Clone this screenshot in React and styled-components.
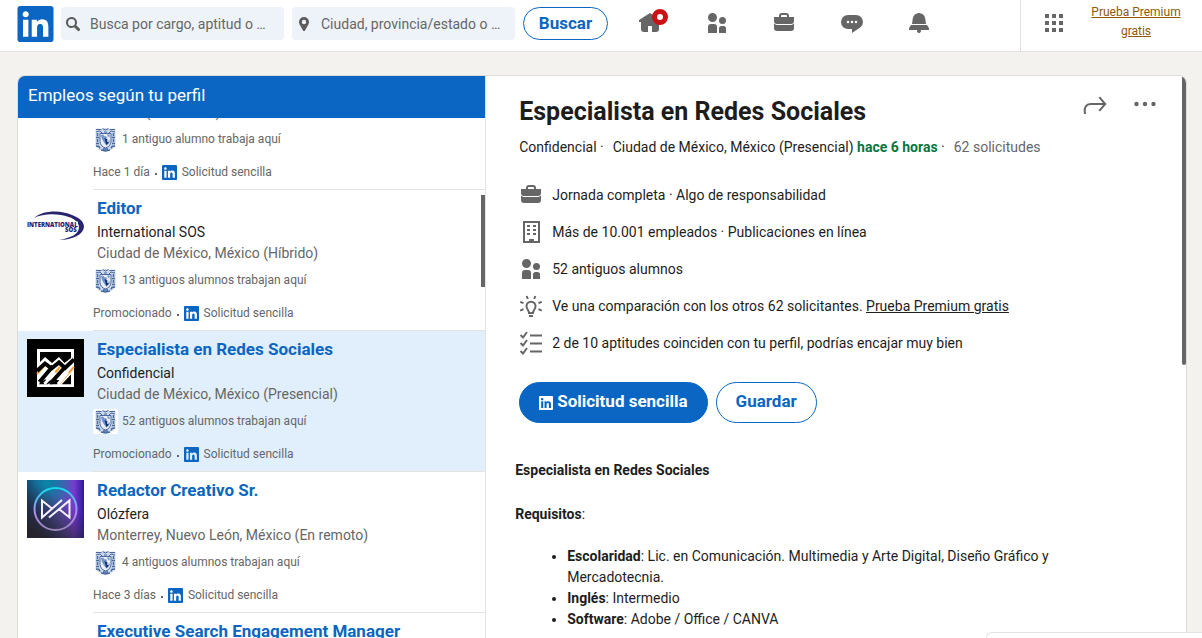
import { useLayoutEffect, useRef } from "react";
import styled, { createGlobalStyle } from "styled-components";
import { FaLinkedin } from "react-icons/fa6";

const theme = {
  blue: "#0a66c2",
  text: "#1d1d1d",
  muted: "#666666",
  line: "#e4e3e0",
  font: `Roboto, "Liberation Sans", sans-serif`,
};

const navItems = [
  {
    label: "Inicio",
    badge: true,
    path: "M23 9v2h-2v7a3 3 0 01-3 3h-4v-6h-4v6H6a3 3 0 01-3-3v-7H1V9l11-7 5 3.18V2h3v5.09z",
  },
  {
    label: "Mi red",
    path: "M12 16v6H3v-6a3 3 0 013-3h3a3 3 0 013 3zm5.5-3A3.5 3.5 0 1014 9.5a3.5 3.5 0 003.5 3.5zm1 2h-2a2.5 2.5 0 00-2.5 2.5V22h7v-4.5a2.5 2.5 0 00-2.5-2.5zM7.5 2A4.5 4.5 0 1012 6.5 4.49 4.49 0 007.5 2z",
  },
  {
    label: "Empleos",
    path: "M17 6V5a3 3 0 00-3-3h-4a3 3 0 00-3 3v1H2v4a3 3 0 003 3h14a3 3 0 003-3V6zM9 5a1 1 0 011-1h4a1 1 0 011 1v1H9zm10 9a4 4 0 003-1.38V17a3 3 0 01-3 3H5a3 3 0 01-3-3v-4.38A4 4 0 005 14z",
  },
  {
    label: "Mensajes",
    path: "M16 4H8a7 7 0 000 14h4v4l8.16-5.39A6.78 6.78 0 0023 11a7 7 0 00-7-7zm-8 8.25A1.25 1.25 0 119.25 11 1.25 1.25 0 018 12.25zm4 0A1.25 1.25 0 1113.25 11 1.25 1.25 0 0112 12.25zm4 0A1.25 1.25 0 1117.25 11 1.25 1.25 0 0116 12.25z",
  },
  {
    label: "Notificaciones",
    path: "M22 19h-8.28a2 2 0 11-3.44 0H2v-1a4.52 4.52 0 011.17-2.83l1-1.17h15.7l1 1.17A4.42 4.42 0 0122 18zM18.21 7.44A6.27 6.27 0 0012 2a6.27 6.27 0 00-6.21 5.44L5 13h14z",
  },
];

const gridPath =
  "M3 3h4v4H3zm7 4h4V3h-4zm7-4v4h4V3zM3 14h4v-4H3zm7 0h4v-4h-4zm7 0h4v-4h-4zM3 21h4v-4H3zm7 0h4v-4h-4zm7 0h4v-4h-4z";

const jobs = [
  {
    title: "",
    company: "",
    place: "México (Presencial)",
    alumni: "1 antiguo alumno trabaja aquí",
    when: "Hace 1 día",
  },
  {
    title: "Editor",
    company: "International SOS",
    place: "Ciudad de México, México (Híbrido)",
    alumni: "13 antiguos alumnos trabajan aquí",
    when: "Promocionado",
    logo: SosLogo,
  },
  {
    title: "Especialista en Redes Sociales",
    company: "Confidencial",
    place: "Ciudad de México, México (Presencial)",
    alumni: "52 antiguos alumnos trabajan aquí",
    when: "Promocionado",
    logo: PeaksLogo,
    selected: true,
  },
  {
    title: "Redactor Creativo Sr.",
    company: "Olózfera",
    place: "Monterrey, Nuevo León, México (En remoto)",
    alumni: "4 antiguos alumnos trabajan aquí",
    when: "Hace 3 días",
    logo: OlozferaLogo,
  },
  {
    title: "Executive Search Engagement Manager",
    company: "",
    place: "",
    alumni: "",
    when: "",
  },
];

export default function App() {
  const scroller = useRef(null);

  useLayoutEffect(() => {
    scroller.current.scrollTop = 72;
  }, []);

  return (
    <Page>
      <GlobalStyle />
      <TopBar>
        <Brand href="#" aria-label="LinkedIn">
          <FaLinkedin viewBox="0 32 448 448" />
        </Brand>
        <SearchForm onSubmit={(e) => e.preventDefault()}>
          <SearchBox>
            <svg viewBox="0 0 16 16" aria-hidden="true">
              <path d="M14.56 12.44L11.3 9.18a5.51 5.51 0 10-2.12 2.12l3.26 3.26a1.5 1.5 0 102.12-2.12zM3 6.5A3.5 3.5 0 116.5 10 3.5 3.5 0 013 6.5z" />
            </svg>
            <input aria-label="Cargo" placeholder="Busca por cargo, aptitud o …" />
          </SearchBox>
          <SearchBox>
            <svg viewBox="0 0 16 16" aria-hidden="true">
              <path d="M8 1a5 5 0 00-5 5 5.2 5.2 0 00.64 2.5L7 14.4a1.15 1.15 0 002 0l3.36-5.9A5.2 5.2 0 0013 6a5 5 0 00-5-5zm0 7.2A2.2 2.2 0 1110.2 6 2.2 2.2 0 018 8.2z" />
            </svg>
            <input aria-label="Lugar" placeholder="Ciudad, provincia/estado o …" />
          </SearchBox>
          <SearchButton type="submit">Buscar</SearchButton>
        </SearchForm>
        <Nav>
          {navItems.map((item) => (
            <NavLink href="#" key={item.label} aria-label={item.label}>
              <Icon path={item.path} />
              {item.badge && <Badge />}
            </NavLink>
          ))}
          <NavLink href="#" aria-label="Yo" />
        </Nav>
        <Extras>
          <AppsButton type="button" aria-label="Productos">
            <Icon path={gridPath} />
          </AppsButton>
          <PremiumLink href="#">Prueba Premium gratis</PremiumLink>
        </Extras>
      </TopBar>

      <Main>
        <Card>
          <ListPane>
            <ListTitle>Empleos según tu perfil</ListTitle>
            <Jobs ref={scroller}>
              {jobs.map((job, i) => (
                <JobItem job={job} key={i} />
              ))}
            </Jobs>
            <ListThumb />
          </ListPane>
          <Detail>
            <DetailHead>
              <h1>Especialista en Redes Sociales</h1>
              <Actions>
                <IconButton type="button" aria-label="Compartir">
                  <svg viewBox="0 0 24 24" fill="none" stroke="currentColor" strokeWidth="2">
                    <path d="M2 20l-.2-1.8C1 13.5 3.2 10 7.5 10H22M16.3 3.2L22.2 10l-5.9 6.8" />
                  </svg>
                </IconButton>
                <IconButton type="button" aria-label="Más opciones">
                  <svg viewBox="0 0 24 24">
                    <circle cx="3.5" cy="10" r="2.2" />
                    <circle cx="12" cy="10" r="2.2" />
                    <circle cx="20.5" cy="10" r="2.2" />
                  </svg>
                </IconButton>
              </Actions>
            </DetailHead>
            <Meta>
              <span>Confidencial ·</span>
              <span>
                Ciudad de México, México (Presencial) <b>hace 6 horas</b> ·
              </span>
              <em>62 solicitudes</em>
            </Meta>
            <Facts>
              <li>
                <Icon path={navItems[2].path} />
                Jornada completa · Algo de responsabilidad
              </li>
              <li>
                <Icon path="M4 1v22h17V1zm15 20h-4v-2h-5v2H6V3h13zM8 5h3v2H8zm6 0h3v2h-3zM8 9h3v2H8zm6 0h3v2h-3zm-6 4h3v2H8zm6 0h3v2h-3z" />
                Más de 10.001 empleados · Publicaciones en línea
              </li>
              <li>
                <Icon path={navItems[1].path} />
                52 antiguos alumnos
              </li>
              <li>
                <svg viewBox="0 0 24 24" fill="none" stroke="currentColor" strokeWidth="2" aria-hidden="true">
                  <path d="M10 19c0-3-2.500-3.500-2.500-6.800a4.500 4.500 0 019 0c0 3.300-2.500 3.800-2.500 6.800zM10 22h4M8.800 5L7.700 2M15.200 5l1.100-3M4.500 9.200L1.200 7.800M4.500 15.200l-3.300 1.500M19.500 9.200l3.300-1.400M19.500 15.200l3.300 1.500" />
                </svg>
                <span>
                  Ve una comparación con los otros 62 solicitantes. <a href="#">Prueba Premium gratis</a>
                </span>
              </li>
              <li>
                <svg viewBox="0 0 24 24" fill="none" stroke="currentColor" strokeWidth="2" aria-hidden="true">
                  <path d="M11 4.500h12M11 12.500h12M11 20.500h12M1.500 4L4 6.500 8 1M1.500 12L4 14.500 8 9M1.500 20L4 22.500 8 17" />
                </svg>
                2 de 10 aptitudes coinciden con tu perfil, podrías encajar muy bien
              </li>
            </Facts>
            <Buttons>
              <Pill type="button" $primary>
                <FaLinkedin viewBox="0 32 448 448" />
                Solicitud sencilla
              </Pill>
              <Pill type="button">Guardar</Pill>
            </Buttons>
            <Description>
              <p>
                <b>Especialista en Redes Sociales</b>
              </p>
              <p>
                <b>Requisitos</b>:
              </p>
              <ul>
                <li>
                  <b>Escolaridad</b>: Lic. en Comunicación. Multimedia y Arte Digital, Diseño Gráfico y
                  Mercadotecnia.
                </li>
                <li>
                  <b>Inglés</b>: Intermedio
                </li>
                <li>
                  <b>Software</b>: Adobe / Office / CANVA
                </li>
              </ul>
            </Description>
            <DetailThumb />
          </Detail>
        </Card>
      </Main>
      <ChatDock />
    </Page>
  );
}

function Icon({ path }) {
  return (
    <svg viewBox="0 0 24 24" aria-hidden="true">
      <path d={path} />
    </svg>
  );
}

function JobItem({ job }) {
  const Logo = job.logo;
  return (
    <Job $selected={job.selected}>
      <LogoBox>{Logo && <Logo />}</LogoBox>
      <JobBody>
        <JobTitle href="#">{job.title}</JobTitle>
        <Company>{job.company}</Company>
        <Place>{job.place}</Place>
        {job.alumni && (
          <Alumni>
            <Crest />
            {job.alumni}
          </Alumni>
        )}
        {job.when && (
          <JobFooter>
            {job.when}
            <Dot />
            <FaLinkedin viewBox="0 32 448 448" />
            Solicitud sencilla
          </JobFooter>
        )}
      </JobBody>
    </Job>
  );
}

// university shield, shown next to the alumni count
function Crest() {
  return (
    <svg viewBox="0 0 25 25" aria-hidden="true">
      <rect width="25" height="25" rx="2" fill="#fff" />
      <path d="M2.500 2q3-1 6 0l4-1 4 1q3-1 6 0v17l-3 3-7 2.500L6 22.500l-3.500-3z" fill="#cdd7e9" />
      <g fill="none" stroke="#46689f">
        <path d="M3 2.500h5.500M16.500 2.500H22M9.500 1.500l3 1.500 3-1.500M3 5l4-1 2 2M22 5l-4-1-2 2M11 5h3" />
        <path d="M4.500 6v3M3 10.500h3M4.500 12v3M3 16.500h3M20.500 6v3M19 10.500h3M20.500 12v3M19 16.500h3" strokeWidth="1.500" />
        <path d="M3 19l3 .5 1 2M22 19l-3 .5-1 2M8 23l4.500 1 4.500-1M10 22h5" strokeWidth="1.400" />
        <path d="M7 6.500h11v8q-.5 5-5.500 6.500Q7.500 19.500 7 14.500z" fill="#e8eef7" />
      </g>
      <path d="M8 8l2-.5 1.500 2 1.500-.5 1 2-1.500 2 .5 3 .5 2.500-2.500-3-2-3.500zM14 7.500h2.500v3L15 9.500zM15.500 13l1.500 1-1.500 3.500z" fill="#7492c4" />
      <path d="M11.500 11l3 1.500-.5 2 2 1-2.500 3-1-3.500z" fill="#0d3276" />
    </svg>
  );
}

function SosLogo() {
  return (
    <svg viewBox="0 0 57 58" role="img" aria-label="International SOS">
      <path
        d="M7 20C16 12 34 12 45 17c8 3 12 7 12 12-1 8-11 12.500-25 13 12-2 20-6 20-13 0-6-8-10.500-18-12-10-1.500-20-.5-27 3z"
        fill="#28246f"
      />
      <path d="M45 23.500h6V29h-6z" fill="#fff" />
      <text x="0" y="29" fill="#28246f" fontFamily="Open Sans, sans-serif" fontWeight="800" fontSize="6">
        INTERNATIONAL
      </text>
      <text x="38" y="34" fill="#28246f" fontFamily="Open Sans, sans-serif" fontWeight="800" fontSize="6">
        SOS
      </text>
    </svg>
  );
}

function PeaksLogo() {
  return (
    <svg viewBox="0 0 57 58" aria-hidden="true">
      <rect width="57" height="58" fill="#000" />
      <path d="M10 10h37v38H10z" fill="#fff" />
      <path d="M13 13h31v6l-6.500 5L32 18l-7 6-7-6-5 5z" fill="#000" />
      <path d="M33 28L19 44M47 28L32 45M18 26l-8 9" fill="none" stroke="#f0a030" strokeWidth="2" />
      <path
        d="M10 32l8-7.500 6.500 5L32 23.500l6 5.500 9-8.500M26 27L12.500 43M39 27L23 45"
        fill="none"
        stroke="#000"
        strokeWidth="4"
      />
      <path d="M12 45.500h9l3-4-6-1-5 3zM22 45.500h8l4-4-6-1zM34.500 45.500H44V35.500z" fill="#000" />
      <path d="M28 33L17.500 45M41 33L31 45" fill="none" stroke="#fff" strokeWidth="3" />
      <path d="M10 45.500h37V48H10z" fill="#fff" />
    </svg>
  );
}

function OlozferaLogo() {
  return (
    <svg viewBox="0 0 57 58" aria-hidden="true">
      <defs>
        <linearGradient id="oz-base" x1="0" y1="0" x2="1" y2="0">
          <stop offset="0" stopColor="#123c68" />
          <stop offset="0.6" stopColor="#5a4fae" />
          <stop offset="0.82" stopColor="#7a3ad0" />
          <stop offset="1" stopColor="#2a1c9c" />
        </linearGradient>
        <radialGradient id="oz-teal" cx="0.35" cy="0.05" r="0.5">
          <stop offset="0" stopColor="#0788a8" />
          <stop offset="1" stopColor="#0788a8" stopOpacity="0" />
        </radialGradient>
        <linearGradient id="oz-shade" x1="0.7" y1="0.4" x2="0.3" y2="1">
          <stop offset="0" stopColor="#26232f" stopOpacity="0" />
          <stop offset="1" stopColor="#26232f" />
        </linearGradient>
        <linearGradient id="oz-ring" x1="0" y1="0" x2="0" y2="1">
          <stop offset="0" stopColor="#16d9ee" />
          <stop offset="0.6" stopColor="#b58cf0" />
          <stop offset="1" stopColor="#9a86b8" />
        </linearGradient>
      </defs>
      <rect width="57" height="58" fill="url(#oz-base)" />
      <rect width="57" height="58" fill="url(#oz-teal)" />
      <rect width="57" height="58" fill="url(#oz-shade)" />
      <circle cx="28.500" cy="29" r="21" fill="none" stroke="url(#oz-ring)" strokeWidth="2" />
      <path
        d="M35 20L15 37.500v-17l10.500 8.500M22 37.500l20.500-17v17L32 29"
        fill="none"
        stroke="#f4efff"
        strokeWidth="2"
      />
    </svg>
  );
}

const GlobalStyle = createGlobalStyle`
  * {
    box-sizing: border-box;
  }
  body {
    margin: 0;
    background: #f3f2ee;
    color: ${theme.text};
    font-family: ${theme.font};
    font-size: 14px;
  }
  h1, h2, p, ul {
    margin: 0;
    padding: 0;
  }
  button, input {
    font-family: inherit;
  }
  svg {
    display: block;
    flex-shrink: 0;
    fill: currentColor;
  }
  svg[fill="none"] {
    fill: none;
  }
`;

const Page = styled.div`
  display: flex;
  flex-direction: column;
  height: 100vh;
  overflow: hidden;
`;

const TopBar = styled.header`
  display: flex;
  height: 52px;
  padding: 0 17px;
  background: #fff;
  border-bottom: 1px solid ${theme.line};
`;

const Brand = styled.a`
  padding-top: 6px;
  color: ${theme.blue};

  svg {
    width: 37px;
    height: 36px;
  }
`;

const SearchForm = styled.form`
  display: flex;
  flex: 547 1 0;
  gap: 8px;
  padding: 7px 0 11px 7px;
`;

const SearchBox = styled.label`
  display: flex;
  flex: 1;
  align-items: center;
  gap: 9px;
  min-width: 0;
  padding-left: 4px;
  border-radius: 4px;
  background: #edf3f8;
  color: #5c5c5c;

  svg {
    width: 16px;
    height: 16px;
  }

  input {
    flex: 1;
    min-width: 0;
    padding: 0;
    border: 0;
    outline: 0;
    background: none;
    font-size: 14px;
  }

  input::placeholder {
    color: #666;
    opacity: 1;
  }
`;

const SearchButton = styled.button`
  width: 85px;
  padding: 0 0 2px;
  border: 1px solid ${theme.blue};
  border-radius: 17px;
  background: #fff;
  color: ${theme.blue};
  font-size: 17px;
  font-weight: bold;
`;

const Nav = styled.nav`
  display: flex;
  flex: 404 1 0;
  padding-left: 8px;
`;

const NavLink = styled.a`
  position: relative;
  display: flex;
  flex: 1;
  justify-content: center;
  padding-top: 11px;
  color: ${theme.muted};

  svg {
    width: 24px;
    height: 24px;
  }
`;

const Badge = styled.span`
  position: absolute;
  top: 9px;
  left: 50%;
  width: 16px;
  height: 16px;
  margin-left: 2px;
  border: 5px solid #cb1016;
  border-radius: 50%;
  background: #fff;
`;

const Extras = styled.div`
  display: flex;
  border-left: 1px solid ${theme.line};
`;

const AppsButton = styled.button`
  display: flex;
  justify-content: center;
  width: 66px;
  padding: 11px 0 0;
  border: 0;
  background: none;
  color: ${theme.muted};

  svg {
    width: 24px;
    height: 24px;
  }
`;

const PremiumLink = styled.a`
  width: 98px;
  padding-top: 3px;
  color: #915907;
  font-size: 12px;
  line-height: 19px;
  text-align: center;
`;

const Main = styled.main`
  flex: 1;
  min-height: 0;
  padding: 23px 15px 0 17px;
`;

const Card = styled.div`
  display: flex;
  height: 100%;
  overflow: hidden;
  border: 1px solid #dddcd8;
  border-bottom: 0;
  border-radius: 8px 8px 0 0;
  background: #fff;
`;

const ListPane = styled.section`
  position: relative;
  display: flex;
  flex: 0 0 40%;
  flex-direction: column;
`;

const ListTitle = styled.h2`
  padding: 7px 10px 11px;
  background: ${theme.blue};
  color: #fff;
  font-size: 17px;
  font-weight: normal;
  line-height: 24px;
`;

const Jobs = styled.ul`
  flex: 1;
  min-height: 0;
  overflow-y: auto;
  padding-top: 3px;
  list-style: none;
  scrollbar-width: none;
`;

const Job = styled.li`
  display: flex;
  min-height: 141px;
  background: ${(props) => (props.$selected ? "#e1effd" : "#fff")};
`;

const LogoBox = styled.div`
  width: 75px;
  padding: 8px 9px;

  svg {
    width: 57px;
    height: 58px;
  }
`;

const JobBody = styled.div`
  flex: 1;
  padding: 5px 0 7px;
  border-bottom: 1px solid ${theme.line};
`;

const JobTitle = styled.a`
  display: block;
  min-height: 27px;
  padding-left: 4px;
  color: ${theme.blue};
  font-size: 17px;
  font-weight: bold;
  line-height: 27px;
  text-decoration: none;
`;

const Company = styled.p`
  min-height: 21px;
  padding-left: 4px;
  line-height: 21px;
`;

const Place = styled(Company)`
  color: ${theme.muted};
`;

const Alumni = styled.p`
  display: flex;
  align-items: center;
  gap: 4px;
  height: 24px;
  margin-top: 4px;
  color: ${theme.muted};
  font-size: 12px;

  svg {
    width: 25px;
    height: 25px;
  }
`;

const JobFooter = styled.p`
  display: flex;
  align-items: center;
  height: 20px;
  margin-top: 11px;
  color: ${theme.muted};
  font-size: 12px;

  svg {
    width: 15px;
    height: 15px;
    margin-right: 5px;
    color: ${theme.blue};
  }
`;

const Dot = styled.i`
  width: 2px;
  height: 2px;
  margin: 3px 5px 0 5px;
  background: ${theme.muted};
`;

const Thumb = styled.div`
  position: absolute;
  right: 0;
  width: 4px;
  background: #666;
`;

const ListThumb = styled(Thumb)`
  top: 119px;
  height: 92px;
`;

const DetailThumb = styled(Thumb)`
  top: 0;
  height: 289px;
  border-radius: 0 0 2px 2px;
`;

const Detail = styled.article`
  position: relative;
  flex: 1;
  min-width: 0;
  padding: 18px 29px 0 33px;
  border-left: 1px solid ${theme.line};
`;

const DetailHead = styled.div`
  display: flex;
  justify-content: space-between;

  h1 {
    font-size: 25px;
    line-height: 36px;
  }
`;

const Actions = styled.div`
  display: flex;
  gap: 26px;
`;

const IconButton = styled.button`
  height: 24px;
  padding: 0;
  border: 0;
  background: none;
  color: ${theme.muted};

  svg {
    width: 24px;
    height: 24px;
  }
`;

const Meta = styled.p`
  display: flex;
  gap: 9px;
  margin-top: 7px;
  line-height: 20px;

  b {
    color: #057642;
  }

  em {
    color: ${theme.muted};
    font-style: normal;
  }
`;

const Facts = styled.ul`
  margin-top: 19px;
  list-style: none;

  li {
    display: flex;
    align-items: center;
    gap: 9px;
    height: 37px;
  }

  svg {
    width: 24px;
    height: 24px;
    color: ${theme.muted};
  }

  a {
    color: inherit;
  }
`;

const Buttons = styled.div`
  display: flex;
  gap: 8px;
  margin-top: 21px;
`;

const Pill = styled.button`
  display: flex;
  align-items: center;
  gap: 4px;
  height: 41px;
  padding: 0 19px 4px;
  border: 1px solid ${theme.blue};
  border-radius: 21px;
  background: ${(props) => (props.$primary ? theme.blue : "#fff")};
  color: ${(props) => (props.$primary ? "#fff" : theme.blue)};
  font-size: 17px;
  font-weight: bold;

  svg {
    width: 14px;
    height: 14px;
    margin-top: 4px;
  }
`;

const Description = styled.div`
  margin: 37px 0 0 -4px;
  line-height: 21px;

  p {
    margin-bottom: 23px;
  }

  ul {
    margin-top: -2px;
    padding: 0 60px 0 52px;
  }
`;

const ChatDock = styled.aside`
  position: fixed;
  right: 0;
  bottom: 0;
  width: 216px;
  height: 6px;
  border: 1px solid ${theme.line};
  border-width: 1px 0 0 1px;
  border-radius: 8px 0 0 0;
  background: #fff;
`;
